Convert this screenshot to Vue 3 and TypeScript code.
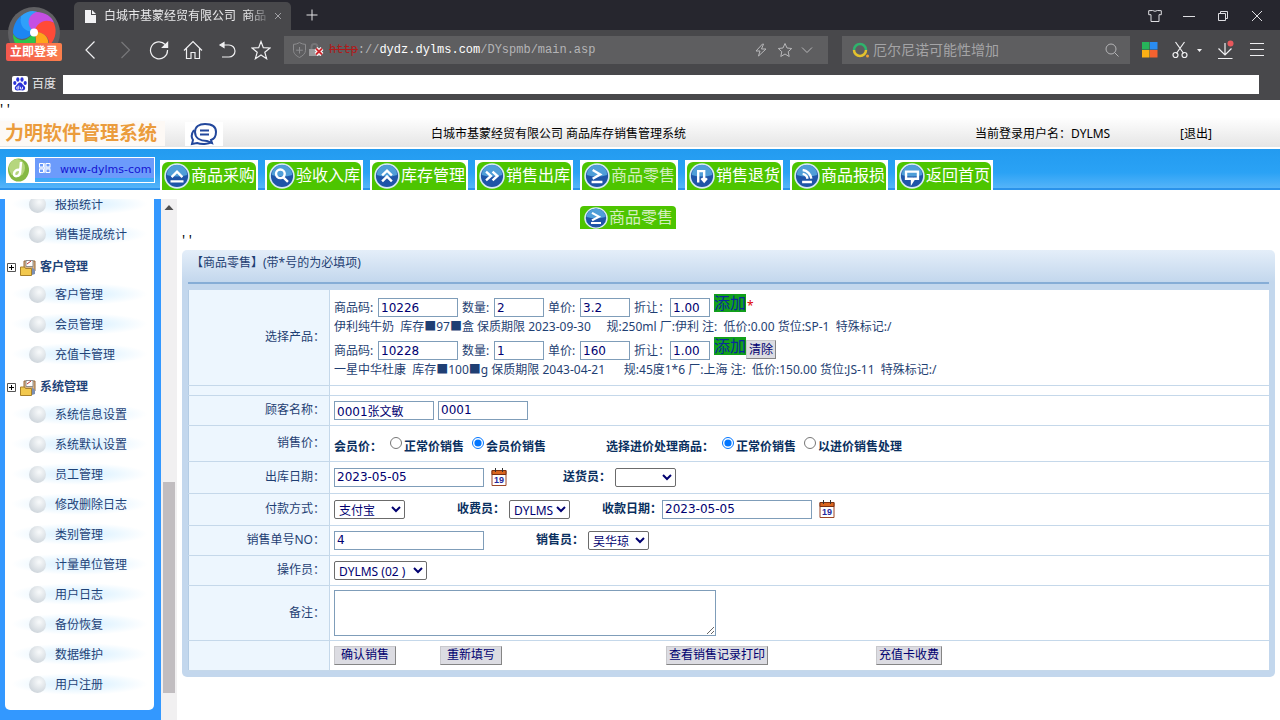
<script setup lang="ts">
import { ref } from 'vue'

interface MenuRow {
  text: string
  head?: boolean
}

interface Product {
  code: string
  qty: string
  price: string
  discount: string
  detail: string
}

const nav = [
  { text: '商品采购', icon: 'up' },
  { text: '验收入库', icon: 'search' },
  { text: '库存管理', icon: 'double' },
  { text: '销售出库', icon: 'right' },
  { text: '商品零售', icon: 'sigma', active: true },
  { text: '销售退货', icon: 'turn' },
  { text: '商品报损', icon: 'rss' },
  { text: '返回首页', icon: 'chat' },
]

const glyphs: Record<string, string> = {
  up: 'M7 13l5-5 5 5M6 17h12',
  search: 'M6.5 10a4 4 0 1 0 8 0a4 4 0 1 0-8 0M13.5 13.5l4 4',
  double: 'M7.5 11.5L12 7l4.500 4.500M7.500 17L12 12.500L16.500 17',
  right: 'M6.500 8l4.500 4l-4.500 4M12.500 8l4.500 4l-4.500 4',
  sigma: 'M8 6.500l7 4l-7 4M7 17.500h10',
  turn: 'M8.500 18V7.500h5.500V16M11.500 14l2.500 3l2.500-3',
  rss: 'M8 6.500a9 9 0 0 1 8 8M8 10a5.500 5.500 0 0 1 4.500 4.500M7.500 17.500h9',
  chat: 'M6.500 8h11v6.500h-3.500l-2 3v-3h-5.500z',
}

const menu: MenuRow[] = [
  { text: '报损统计' },
  { text: '销售提成统计' },
  { text: '客户管理', head: true },
  { text: '客户管理' },
  { text: '会员管理' },
  { text: '充值卡管理' },
  { text: '系统管理', head: true },
  { text: '系统信息设置' },
  { text: '系统默认设置' },
  { text: '员工管理' },
  { text: '修改删除日志' },
  { text: '类别管理' },
  { text: '计量单位管理' },
  { text: '用户日志' },
  { text: '备份恢复' },
  { text: '数据维护' },
  { text: '用户注册' },
]

const products = ref<Product[]>([
  {
    code: '10226',
    qty: '2',
    price: '3.2',
    discount: '1.00',
    detail: '伊利纯牛奶  库存■97■盒 保质期限 2023-09-30     规:250ml 厂:伊利 注:  低价:0.00 货位:SP-1  特殊标记:/',
  },
  {
    code: '10228',
    qty: '1',
    price: '160',
    discount: '1.00',
    detail: '一星中华杜康  库存■100■g 保质期限 2043-04-21      规:45度1*6 厂:上海 注:  低价:150.00 货位:JS-11  特殊标记:/',
  },
])

const customer = ref('0001张文敏')
const customerNo = ref('0001')
const priceMode = ref('member')
const costMode = ref('normal')
const outDate = ref('2023-05-05')
const payDate = ref('2023-05-05')
const orderNo = ref('4')
const remark = ref('')
const keyword = ref('')
</script>

<template>
  <div class="window">
    <header class="browser">
      <div class="tabs">
        <div class="tab">
          <svg width="12" height="13" viewBox="0 0 12 13"><path d="M1 0h6v5h5v8H1z" fill="#f2f2f4" /><path d="M8 0l4 4H8z" fill="#f2f2f4" /></svg>
          <span class="tab-title">白城市基蒙经贸有限公司&nbsp; 商品</span>
          <button class="plain" aria-label="关闭标签">
            <svg width="8" height="8" viewBox="0 0 8 8"><path d="M1 1l6 6M7 1L1 7" stroke="#a0a0a4" fill="none" /></svg>
          </button>
        </div>
        <button class="plain new-tab" aria-label="新标签">
          <svg width="12" height="12" viewBox="0 0 12 12"><path d="M6 .5v11M.5 6h11" stroke="#e4e4e6" fill="none" /></svg>
        </button>
        <div class="win-buttons">
          <button class="plain" aria-label="皮肤"><svg width="14" height="14" viewBox="0 0 14 14"><path d="M4.500 1.500q2.500 1.600 5 0l3.800.2v4h-2.300v6.800H3V5.700H.700v-4z" /></svg></button>
          <button class="plain" aria-label="最小化"><svg width="14" height="14" viewBox="0 0 14 14"><path d="M1 7.500h12" /></svg></button>
          <button class="plain" aria-label="还原"><svg width="14" height="14" viewBox="0 0 14 14"><path d="M2.500 4.500h7v7h-7zM4.500 4.500v-2h7v7h-2" /></svg></button>
          <button class="plain" aria-label="关闭"><svg width="14" height="14" viewBox="0 0 14 14"><path d="M2 2l10 10M12 2L2 12" /></svg></button>
        </div>
      </div>

      <div class="toolbar">
        <button class="plain tool" aria-label="后退"><svg width="20" height="20" viewBox="0 0 20 20"><path d="M13.500 1.500L5 10l8.500 8.500" /></svg></button>
        <button class="plain tool dim" aria-label="前进"><svg width="20" height="20" viewBox="0 0 20 20"><path d="M6.500 2l8 8-8 8" /></svg></button>
        <button class="plain tool" aria-label="刷新"><svg width="20" height="20" viewBox="0 0 20 20"><path d="M16.200 4.500A8.500 8.500 0 1 0 18.500 10" /><path class="solid" d="M18.600 2.500v5h-5z" /></svg></button>
        <button class="plain tool" aria-label="主页"><svg width="20" height="20" viewBox="0 0 20 20"><path d="M1 10.500L10 1.500l9 9M3.500 8.500v10h4.500v-6h4v6h4.500v-10" /></svg></button>
        <button class="plain tool" aria-label="撤销"><svg width="20" height="20" viewBox="0 0 20 20"><path d="M6 5h6a5.500 5.500 0 0 1 0 12H5" /><path class="solid" d="M3 5l4-2.500v5z" /></svg></button>
        <button class="plain tool" aria-label="收藏"><svg width="20" height="20" viewBox="0 0 20 20"><path d="M10 1.500l2.300 6.200 6.700.3-5.200 4.200 1.800 6.500-5.600-3.700-5.600 3.700 1.800-6.500L1 8l6.700-.3z" /></svg></button>

        <div class="address">
          <svg class="shield" width="36" height="18" viewBox="0 0 36 18">
            <path d="M7.500 1.500c2 1.300 4 1.800 6 1.800v6c0 3.200-2.600 5.500-6 7.200-3.400-1.700-6-4-6-7.200v-6c2 0 4-.5 6-1.800zM7.500 6v6.500M4.200 9.200h6.600" fill="none" stroke="#8c8c8e" />
            <path d="M17 8h12v7H17z" fill="#9a9a9c" /><path d="M19.500 8V6a3 3 0 0 1 6 0v2" fill="none" stroke="#757577" stroke-width="2" />
            <path d="M24 7.500l6 6M30 7.500l-6 6" stroke="#fff" stroke-width="4" /><path d="M24 7.500l6 6M30 7.500l-6 6" stroke="#cc2a30" stroke-width="1.800" />
          </svg>
          <span class="url"><s>http</s>://<b>dydz.dylms.com</b>/DYspmb/main.asp</span>
          <svg class="addr-icons" width="62" height="16" viewBox="0 0 62 16">
            <path d="M8.500 2L2 9h4l-1.500 5L12 7H7.500L9.500 2z" />
            <path d="M31 1.500l2 4.500 4.700.5-3.500 3.200 1 4.800-4.200-2.500-4.200 2.500 1-4.800-3.500-3.200L29 6z" />
            <path d="M48 5.500l5 5 5-5" />
          </svg>
        </div>

        <div class="search">
          <svg width="18" height="16" viewBox="0 0 18 16">
            <path d="M2 8a6 6 0 0 1 12 0" fill="none" stroke="#2fb36c" stroke-width="2.500" />
            <path d="M14 8a6 6 0 0 1-12 0" fill="none" stroke="#e3c22e" stroke-width="2.500" />
            <circle cx="15.500" cy="14" r="1.500" fill="#f3a032" />
          </svg>
          <input v-model="keyword" placeholder="厄尔尼诺可能性增加" aria-label="搜索" />
          <svg width="14" height="14" viewBox="0 0 14 14"><path d="M11 6A5 5 0 1 1 1 6a5 5 0 0 1 10 0zM9.500 9.500l4 4" fill="none" stroke="#b4b4b6" /></svg>
        </div>

        <div class="extras">
          <svg width="16" height="16" viewBox="0 0 16 16"><path d="M0 0h7.500v7.500H0z" fill="#27b45a" /><path d="M8 0h7.500v7.500H8z" fill="#2a8cf0" /><path d="M0 8h7.500v7.500H0z" fill="#fbb015" /><path d="M8 8h7.500v7.500H8z" fill="#f4622f" /></svg>
          <svg width="32" height="18" viewBox="0 0 32 18" class="line">
            <path d="M3.500 1l8.200 11.500M12.500 1L4.300 12.500" /><circle cx="3.500" cy="14" r="2.500" /><circle cx="12.500" cy="14" r="2.500" />
            <path d="M25 8h5l-2.500 3z" fill="#f2f2f4" stroke="none" />
          </svg>
          <svg width="18" height="20" viewBox="0 0 18 20" class="line">
            <path d="M7 3v12M.5 8.500L7 15l6.500-6.500M-.5 18.500h15" /><circle cx="12.500" cy="3.500" r="3" fill="#e8585c" stroke="none" />
          </svg>
          <svg width="15" height="14" viewBox="0 0 15 14" class="line"><path d="M0 .5h14M0 6.500h14M0 12.500h14" /></svg>
        </div>
      </div>

      <div class="bookmarks">
        <svg width="16" height="16" viewBox="0 0 16 16">
          <rect width="16" height="16" rx="2" fill="#fff" />
          <g fill="#2b32d8"><ellipse cx="2.800" cy="7" rx="1.600" ry="2" /><ellipse cx="5.800" cy="3.500" rx="1.600" ry="2.200" /><ellipse cx="10" cy="3.500" rx="1.600" ry="2.200" /><ellipse cx="13.200" cy="7" rx="1.600" ry="2" /><path d="M8 6.500c2 0 2.500 2 4 3.300 2.300 2 1 5-1.500 4.700-1.800-.2-3.200-.2-5 0C3 14.800 1.700 11.800 4 9.800 5.500 8.500 6 6.500 8 6.500z" /></g>
          <path d="M6.800 9.500v3.500h-2v-2h2M8.500 10.800V13h2v-2.200" fill="none" stroke="#fff" stroke-width=".8" />
        </svg>
        <a href="#">百度</a>
        <div class="blank"></div>
      </div>

      <button class="plain login" aria-label="立即登录">
        <svg width="52" height="52" viewBox="0 0 52 52">
          <circle cx="26" cy="26" r="26" fill="#606063" />
          <path d="M26 25C15 26 9 19 13 9C20 3 27 3 31 6C24 11 23 18 26 25z" fill="#2fa0fa" />
          <path d="M26 25C18 18 19 9 28 5C38 5 44 10 46 16C38 12 30 16 26 25z" fill="#c44fe2" />
          <path d="M26 25C29 15 38 11 46 16C50 26 46 34 41 39C42 30 36 25 26 25z" fill="#ff4a38" />
          <path d="M26 25C36 24 42 31 40 39C34 46 26 46 22 44C29 39 29 32 26 25z" fill="#ffa51c" />
          <path d="M26 25C30 36 26 43 19 46C10 43 5 36 5 27C11 36 19 35 26 25z" fill="#2bc64b" />
          <path d="M26 25C18 35 8 33 5 26C5 18 9 12 13 9C11 18 16 25 26 25z" fill="#1c86f2" />
          <circle cx="26" cy="25.500" r="4" fill="#fff" />
        </svg>
        <span>立即登录</span>
      </button>
    </header>

    <div class="ticks">' '</div>
    <div class="title-bar">
      <div class="brand">
        <strong>力明软件管理系统</strong>
        <div class="talk">
          <svg width="28" height="24" viewBox="0 0 28 24" fill="#fff" stroke="#22479c" stroke-width="2">
            <path d="M4 8C1 12 1 15 3 18l-1 4 5-1c4 1.500 11 1.500 15-1" /><path d="M15 2c7 0 11 3 11 8s-2 7-5 8l1 3-5-2c-7 0-12-3-12-9 0-5 4-8 10-8z" /><path d="M10 8.500h9M10 12.500h9" />
          </svg>
        </div>
      </div>
      <div class="company">白城市基蒙经贸有限公司 商品库存销售管理系统</div>
      <div class="user">当前登录用户名：DYLMS</div>
      <div class="logout"><a href="#">[退出]</a></div>
    </div>

    <div class="nav-bar">
      <div class="site">
        <svg width="28" height="24" viewBox="0 0 28 24"><rect width="28" height="24" fill="#fff" /><ellipse cx="11.500" cy="12" rx="10.500" ry="11.500" fill="#86b944" /><ellipse cx="10" cy="10" rx="8" ry="9" fill="#b6d67e" /><path d="M14 4l-1 11c-1 4-6 4-6 1s3-5 6-4" stroke="#fff" stroke-width="2.500" fill="none" /></svg>
        <div class="site-name">
          <svg width="12" height="10" viewBox="0 0 12 10"><path d="M.5.5h4v3.500h-4zM7 .5h4v3.500H7zM.5 6h4v3.500h-4zM7 6h4v3.500H7zM5.800 0v10M0 5h11.500" fill="none" stroke="#fff" /></svg>
          <span>www-dylms-com</span>
        </div>
      </div>
      <nav>
        <div v-for="n in nav" :key="n.text" class="nav-item">
          <a href="#" class="nav-link" :class="{ active: n.active }">
            <span class="nav-face">
              <svg width="26" height="26" viewBox="0 0 24 24"><circle cx="12" cy="12" r="11" fill="#1f55a8" stroke="#d8eaf4" stroke-width="1.500" /><path d="M2.500 11a9.500 9.500 0 0 1 19 0q-9.500 3-19 0z" fill="#4f9ed8" /><path :d="glyphs[n.icon]" fill="none" stroke="#fff" stroke-width="2.200" /></svg>
              <span>{{ n.text }}</span>
            </span>
          </a>
          <a v-if="n.active" href="#" class="nav-drop active">
            <svg width="24" height="22" viewBox="0 0 24 24" preserveAspectRatio="none"><circle cx="12" cy="12" r="11" fill="#1f55a8" stroke="#d8eaf4" stroke-width="1.500" /><path d="M2.500 11a9.500 9.500 0 0 1 19 0q-9.500 3-19 0z" fill="#4f9ed8" /><path :d="glyphs[n.icon]" fill="none" stroke="#fff" stroke-width="2.200" /></svg>
            <span>{{ n.text }}</span>
          </a>
        </div>
      </nav>
    </div>

    <div class="workspace">
      <aside>
        <ul>
          <li v-for="(m, i) in menu" :key="i" :class="{ head: m.head }">
            <template v-if="m.head">
              <svg width="9" height="9" viewBox="0 0 9 9"><path d="M.5.5h8v8h-8z" fill="#fff" stroke="#555" /><path d="M2 4.500h5M4.500 2v5" stroke="#000" /></svg>
              <svg width="17" height="17" viewBox="0 0 17 17">
                <path d="M4 2h11v10H4z" fill="#d8b48a" stroke="#9a6a3c" /><path d="M6 1.500h7v6H6z" fill="#fff" stroke="#8d8d8d" /><path d="M7 5l4-3" stroke="#b33" /><path d="M12 8l3 3v4l-3 1z" fill="#7b8fb3" />
                <path d="M.5 8h4l1 1.500h6v7H.5z" fill="#f2c84e" stroke="#a8802a" />
              </svg>
            </template>
            <span v-else class="ball"></span>
            <a href="#">{{ m.text }}</a>
          </li>
        </ul>
      </aside>
      <div class="scrollbar">
        <svg width="10" height="6" viewBox="0 0 10 6"><path d="M5 0l4.500 5h-9z" fill="#505050" /></svg>
        <div class="thumb"></div>
      </div>

      <main>
        <div class="ticks inner">' '</div>
        <form class="panel" @submit.prevent>
          <h1>【商品零售】(带*号的为必填项)</h1>
          <table>
            <tbody>
              <tr class="h95">
                <th scope="row">选择产品：</th>
                <td>
                  <div v-for="(p, i) in products" :key="i" class="product">
                    <div class="controls">
                      <label><span class="w44">商品码:</span><input v-model="p.code" class="w80" /></label>
                      <label><span class="w32">数量:</span><input v-model="p.qty" class="w50" /></label>
                      <label><span class="w32">单价:</span><input v-model="p.price" class="w50" /></label>
                      <label><span class="w36">折让：</span><input v-model="p.discount" class="w40" /></label>
                      <div class="actions">
                        <button class="add" type="button">添加</button>
                        <span v-if="i === 0" class="star">*</span>
                        <button v-else class="btn" type="button">清除</button>
                      </div>
                    </div>
                    <p>{{ p.detail }}</p>
                  </div>
                </td>
              </tr>
              <tr class="h10"><th></th><td></td></tr>
              <tr class="h30">
                <th scope="row">顾客名称：</th>
                <td>
                  <div class="line-row">
                    <input v-model="customer" class="w100" aria-label="顾客名称" />
                    <input v-model="customerNo" class="w90 g4" aria-label="顾客编号" />
                  </div>
                </td>
              </tr>
              <tr class="h36">
                <th scope="row">销售价：</th>
                <td>
                  <div class="line-row radios">
                    <b>会员价：</b>
                    <label><input v-model="priceMode" type="radio" value="normal" />正常价销售</label>
                    <label><input v-model="priceMode" type="radio" value="member" />会员价销售</label>
                    <b class="g60">选择进价处理商品：</b>
                    <label><input v-model="costMode" type="radio" value="normal" />正常价销售</label>
                    <label><input v-model="costMode" type="radio" value="cost" />以进价销售处理</label>
                  </div>
                </td>
              </tr>
              <tr class="h32">
                <th scope="row">出库日期：</th>
                <td>
                  <div class="line-row">
                    <input v-model="outDate" class="w150" aria-label="出库日期" />
                    <button class="plain cal" type="button" aria-label="选择日期">
                      <svg width="16" height="18" viewBox="0 0 16 18"><path d="M1 2.500h14v15H1z" fill="#fff" stroke="#9c4526" /><path d="M1 2.500h14v4H1z" fill="#d9651f" stroke="#7a3010" /><path d="M4.500 0v4M11.500 0v4" stroke="#333" /><text x="8" y="15" text-anchor="middle">19</text></svg>
                    </button>
                    <label class="g56">送货员： <select class="w61"><option></option></select></label>
                  </div>
                </td>
              </tr>
              <tr class="h32">
                <th scope="row">付款方式：</th>
                <td>
                  <div class="line-row">
                    <select class="w71" aria-label="付款方式"><option>支付宝</option></select>
                    <label class="g52">收费员： <select class="w61"><option>DYLMS</option></select></label>
                    <label class="g32">收款日期：<input v-model="payDate" class="w150" /></label>
                    <button class="plain cal" type="button" aria-label="选择收款日期">
                      <svg width="16" height="18" viewBox="0 0 16 18"><path d="M1 2.500h14v15H1z" fill="#fff" stroke="#9c4526" /><path d="M1 2.500h14v4H1z" fill="#d9651f" stroke="#7a3010" /><path d="M4.500 0v4M11.500 0v4" stroke="#333" /><text x="8" y="15" text-anchor="middle">19</text></svg>
                    </button>
                  </div>
                </td>
              </tr>
              <tr class="h30">
                <th scope="row">销售单号NO：</th>
                <td>
                  <div class="line-row">
                    <input v-model="orderNo" class="w150" aria-label="销售单号" />
                    <label class="g52">销售员： <select class="w61"><option>吴华琼</option></select></label>
                  </div>
                </td>
              </tr>
              <tr class="h30">
                <th scope="row">操作员：</th>
                <td><div class="line-row"><select class="w93" aria-label="操作员"><option>DYLMS (02 )</option></select></div></td>
              </tr>
              <tr class="h55">
                <th scope="row">备注：</th>
                <td><textarea v-model="remark" aria-label="备注"></textarea></td>
              </tr>
              <tr class="h30">
                <th></th>
                <td>
                  <div class="line-row">
                    <button class="btn w62">确认销售</button>
                    <button class="btn w62 g44" type="reset">重新填写</button>
                    <button class="btn w102 g164" type="button">查看销售记录打印</button>
                    <button class="btn w66 g108" type="button">充值卡收费</button>
                  </div>
                </td>
              </tr>
            </tbody>
          </table>
        </form>
      </main>
    </div>
  </div>
</template>

<style>
body {
  margin: 0;
  background: #fff;
}
</style>

<style scoped>
* {
  box-sizing: border-box;
}
.window {
  min-height: 100vh;
  display: flex;
  flex-direction: column;
  font: 12px/18px "Noto Sans", "Noto Sans CJK SC", sans-serif;
  color: #000;
  overflow: hidden;
}
a {
  color: inherit;
  text-decoration: none;
}
svg {
  display: block;
  flex: none;
}
button,
input,
select,
textarea {
  font: inherit;
  margin: 0;
}
.plain {
  background: none;
  border: 0;
  padding: 0;
  color: inherit;
}

/* Browser frame */
.browser {
  position: relative;
  height: 100px;
  background: #48484b;
  color: #e8e8ea;
}
.tabs {
  height: 30px;
  background: #26262e;
  padding-left: 74px;
  display: flex;
  align-items: flex-end;
}
.tab {
  width: 217px;
  height: 28px;
  border-radius: 5px 5px 0 0;
  background: #48484b;
  display: flex;
  align-items: center;
  padding: 0 10px;
}
.tab-title {
  flex: 1;
  margin: 0 8px 0 8px;
  white-space: nowrap;
  mask-image: linear-gradient(to right, #000 88%, transparent 104%);
}
.new-tab {
  margin: 0 0 9px 15px;
}
.win-buttons {
  display: flex;
  gap: 20px;
  margin-left: auto;
  padding: 0 16px 7px 0;
}
.win-buttons path {
  fill: none;
  stroke: #dedee2;
}
.toolbar {
  height: 40px;
  padding-left: 74px;
  display: flex;
  align-items: center;
}
.tool {
  width: 34px;
  display: flex;
  justify-content: center;
}
.tool path {
  fill: none;
  stroke: #f0f0f2;
  stroke-width: 1.2;
}
.tool .solid {
  fill: #f0f0f2;
}
.dim path {
  stroke: #77777a;
}
.address,
.search {
  height: 28px;
  background: #5e5e60;
  display: flex;
  align-items: center;
}
.address {
  flex: 1 1 544px;
  margin: 0 14px 0 6px;
  padding-left: 8px;
}
.url {
  flex: 1;
  margin-left: 1px;
  font-family: "Liberation Mono", monospace;
  color: #b4b4b6;
}
.url s {
  color: #b01a1a;
}
.url b {
  color: #fff;
  font-weight: 400;
}
.addr-icons {
  margin-right: 12px;
}
.addr-icons path {
  fill: none;
  stroke: #b8b8ba;
}
.search {
  flex: 1 1 288px;
  padding: 0 11px 0 10px;
}
.search input {
  flex: 1;
  min-width: 0;
  border: 0;
  padding: 0 0 0 3px;
  background: none;
  outline: none;
  font-size: 14px;
  color: #fff;
}
.search input::placeholder {
  color: #a4a4a6;
}
.extras {
  width: 150px;
  padding-left: 12px;
  display: flex;
  align-items: center;
  gap: 14px;
}
.line {
  fill: none;
  stroke: #f0f0f2;
  stroke-width: 1.2;
}
.extras .line:last-child {
  stroke-width: 1;
}
.bookmarks {
  height: 28px;
  padding: 0 21px 0 12px;
  display: flex;
  align-items: center;
}
.bookmarks a {
  margin: 0 7px 0 4px;
}
.blank {
  flex: 1;
  height: 19px;
  background: #fff;
}
.login {
  position: absolute;
  left: 8px;
  top: 7px;
}
.login span {
  position: absolute;
  left: -2px;
  top: 36px;
  width: 56px;
  border-radius: 2px;
  background: linear-gradient(90deg, #f2584e, #fb7f4c);
  color: #fff;
  font-weight: 700;
  text-align: center;
}

/* Application header */
.ticks {
  height: 18px;
  font-size: 14px;
  line-height: 18px;
  white-space: pre;
}
.title-bar {
  height: 31px;
  padding-top: 2px;
  border-bottom: 2px solid #fff;
  background: linear-gradient(#fefefe, #e5e5e5);
  display: flex;
  align-items: center;
}
.brand {
  width: 431px;
  display: flex;
  align-items: center;
}
.brand strong {
  width: 165px;
  padding-left: 5px;
  background: #fdf9f5;
  color: #eb9c3c;
  font-size: 19px;
  line-height: 25px;
  white-space: nowrap;
}
.talk {
  margin-left: 20px;
  padding: 0 5px;
  background: #fff;
}
.company {
  flex: 1;
}
.user {
  width: 205px;
}
.logout {
  width: 100px;
}
.nav-bar {
  height: 41px;
  background: linear-gradient(#239bf0, #2aa2f5 60%, #55b4f9);
  border-bottom: 2px solid #2a92ea;
  display: flex;
}
.site {
  width: 149px;
  height: 26px;
  margin: 8px 5px 0 6px;
  border: 1px solid #fff;
  display: flex;
}
.site-name {
  flex: 1;
  height: 20px;
  padding-left: 4px;
  background: #6c9bfb;
  display: flex;
  align-items: center;
  color: #1414d2;
}
.site-name span {
  margin-left: 9px;
  padding-top: 3px;
  font: 11px/18px "DejaVu Sans", sans-serif;
}
nav {
  display: flex;
  gap: 7px;
  padding-top: 11px;
}
.nav-item {
  position: relative;
  width: 98px;
  height: 30px;
}
.nav-link {
  display: block;
  height: 30px;
  padding: 2px 2px 0;
  background: #fff;
}
.nav-face,
.nav-drop {
  display: flex;
  align-items: center;
  background: #4dc500;
  color: #fff;
  font-size: 16px;
  white-space: nowrap;
}
.nav-face span,
.nav-drop span {
  margin-left: 1px;
  padding-bottom: 2px;
}
.nav-face {
  height: 28px;
  padding-left: 2px;
  border-radius: 6px 6px 0 0;
}
.active,
.active .nav-face {
  color: #d3efbf;
}
.nav-drop {
  position: absolute;
  left: 0;
  top: 46px;
  width: 96px;
  height: 23px;
  padding-left: 4px;
  border-radius: 4px 4px 0 0;
  z-index: 1;
}

/* Side menu */
.workspace {
  flex: 1;
  display: flex;
  padding-top: 9px;
}
aside {
  width: 161px;
  padding: 0 7px 10px 5px;
  background: #3398ff;
}
ul {
  list-style: none;
  margin: 0;
  padding: 0 0 11px;
  background: #fff;
  border-radius: 0 0 5px 5px;
  overflow: hidden;
}
li {
  height: 30px;
  padding: 1px 0 0 24px;
  display: flex;
  align-items: center;
  gap: 16px;
  color: #1f4378;
  background: radial-gradient(ellipse 68px 11px at 50% 50%, #e0f3ff 30%, #fff 100%);
}
li:first-child {
  margin-top: -10px;
}
.ball {
  width: 17px;
  height: 17px;
  margin-right: -7px;
  border-radius: 50%;
  background: radial-gradient(circle at 60% 35%, #f8fafb, #cfd6dc 75%);
}
li.head {
  padding: 6px 0 0 2px;
  gap: 3px;
  background: none;
  font-weight: 700;
}
.head svg:nth-child(2) {
  margin-left: 1px;
}
.scrollbar {
  width: 16px;
  padding-top: 6px;
  background: #f1f0f1;
  display: flex;
  flex-direction: column;
  align-items: center;
}
.thumb {
  width: 12px;
  flex: 211;
  margin: 271px 0 27px;
  background: #c1bdc0;
}

/* Sale form */
main {
  flex: 1;
  padding: 0 5px;
}
.inner {
  height: 51px;
  padding-top: 32px;
}
.panel {
  padding: 0 6px 6px;
  border-radius: 5px;
  background: linear-gradient(#e4eef9, #c3d7ed 32px);
  color: #1f3f73;
}
h1 {
  height: 34px;
  margin: 0 0 6px;
  padding: 4px 0 0 3px;
  border-bottom: 2px solid #86add6;
  font: inherit;
}
table {
  width: 100%;
  border-collapse: collapse;
  background: #fff;
}
th,
td {
  padding: 0 4px;
  border-bottom: 1px solid #c5d8ea;
  text-align: left;
}
th {
  width: 141px;
  border-left: 1px solid #b4cce4;
  border-right: 1px solid #c5d8ea;
  background: #edf6fe;
  text-align: right;
  font-weight: 400;
}
.h95 { height: 95px; }
.h10 { height: 10px; }
.h30 { height: 30px; }
.h32 { height: 32px; }
.h36 { height: 36px; }
.h55 { height: 55px; }
.controls,
.controls label,
.line-row,
.line-row label,
.actions {
  display: flex;
  align-items: center;
}
.controls {
  height: 23px;
  align-items: flex-end;
  gap: 4px;
}
.actions {
  align-self: flex-start;
  align-items: flex-start;
}
.product p {
  margin: 0;
  height: 20px;
  line-height: 20px;
  white-space: pre;
}
td input,
select {
  height: 19px;
  padding: 0 2px;
  border: 1px solid #7f9db9;
  background: #fff;
  color: #000070;
  font-family: "DejaVu Sans", "Noto Sans CJK SC", sans-serif;
  line-height: 16px;
}
select {
  padding: 0;
  border-color: #6b6b6b;
  border-radius: 2px;
  font-family: inherit;
}
.add {
  width: 32px;
  height: 18px;
  padding: 0;
  border: 0;
  background: #12a01a;
  color: #0a2a9c;
  font-size: 16px;
  line-height: 18px;
}
.star {
  margin: 3px 0 0 1px;
  color: #e00000;
}
.btn {
  height: 19px;
  padding: 0 2px;
  border: 1px solid #c8c8cc;
  border-right-color: #858585;
  border-bottom-color: #858585;
  background: #dcdce2;
  color: #000070;
  line-height: 16px;
}
.actions .btn {
  width: 30px;
  padding: 0;
  margin-top: 3px;
}
.line-row label,
.line-row b {
  color: #0a3060;
  font-weight: 700;
  white-space: nowrap;
}
.line-row label select {
  margin-left: 4px;
  font-weight: 400;
}
.line-row label input {
  font-weight: 400;
}
.radios {
  padding-top: 8px;
}
.radios label {
  margin-left: 8px;
}
.radios input {
  width: 12px;
  height: 12px;
  margin: 0 2px 8px 0;
}
.cal {
  margin-left: 7px;
}
.cal text {
  font: 700 9px "Liberation Sans", sans-serif;
  fill: #25259c;
}
textarea {
  display: block;
  width: 382px;
  height: 46px;
  border: 1px solid #7f9db9;
  background: #fff;
}
.g4 { margin-left: 4px; }
.g32 { margin-left: 32px; }
.g44 { margin-left: 44px; }
.g52 { margin-left: 52px; }
.g56 { margin-left: 56px; }
.g60 { margin-left: 60px; }
.g108 { margin-left: 108px; }
.g164 { margin-left: 164px; }
.w32 { width: 32px; }
.w36 { width: 36px; }
.w40 { width: 40px; }
.w44 { width: 44px; }
.w50 { width: 50px; }
.w61 { width: 61px; }
.w62 { width: 62px; }
.w66 { width: 66px; }
.w71 { width: 71px; }
.w80 { width: 80px; }
.w90 { width: 90px; }
.w93 { width: 93px; }
.w100 { width: 100px; }
.w102 { width: 102px; }
.w150 { width: 150px; }
</style>
